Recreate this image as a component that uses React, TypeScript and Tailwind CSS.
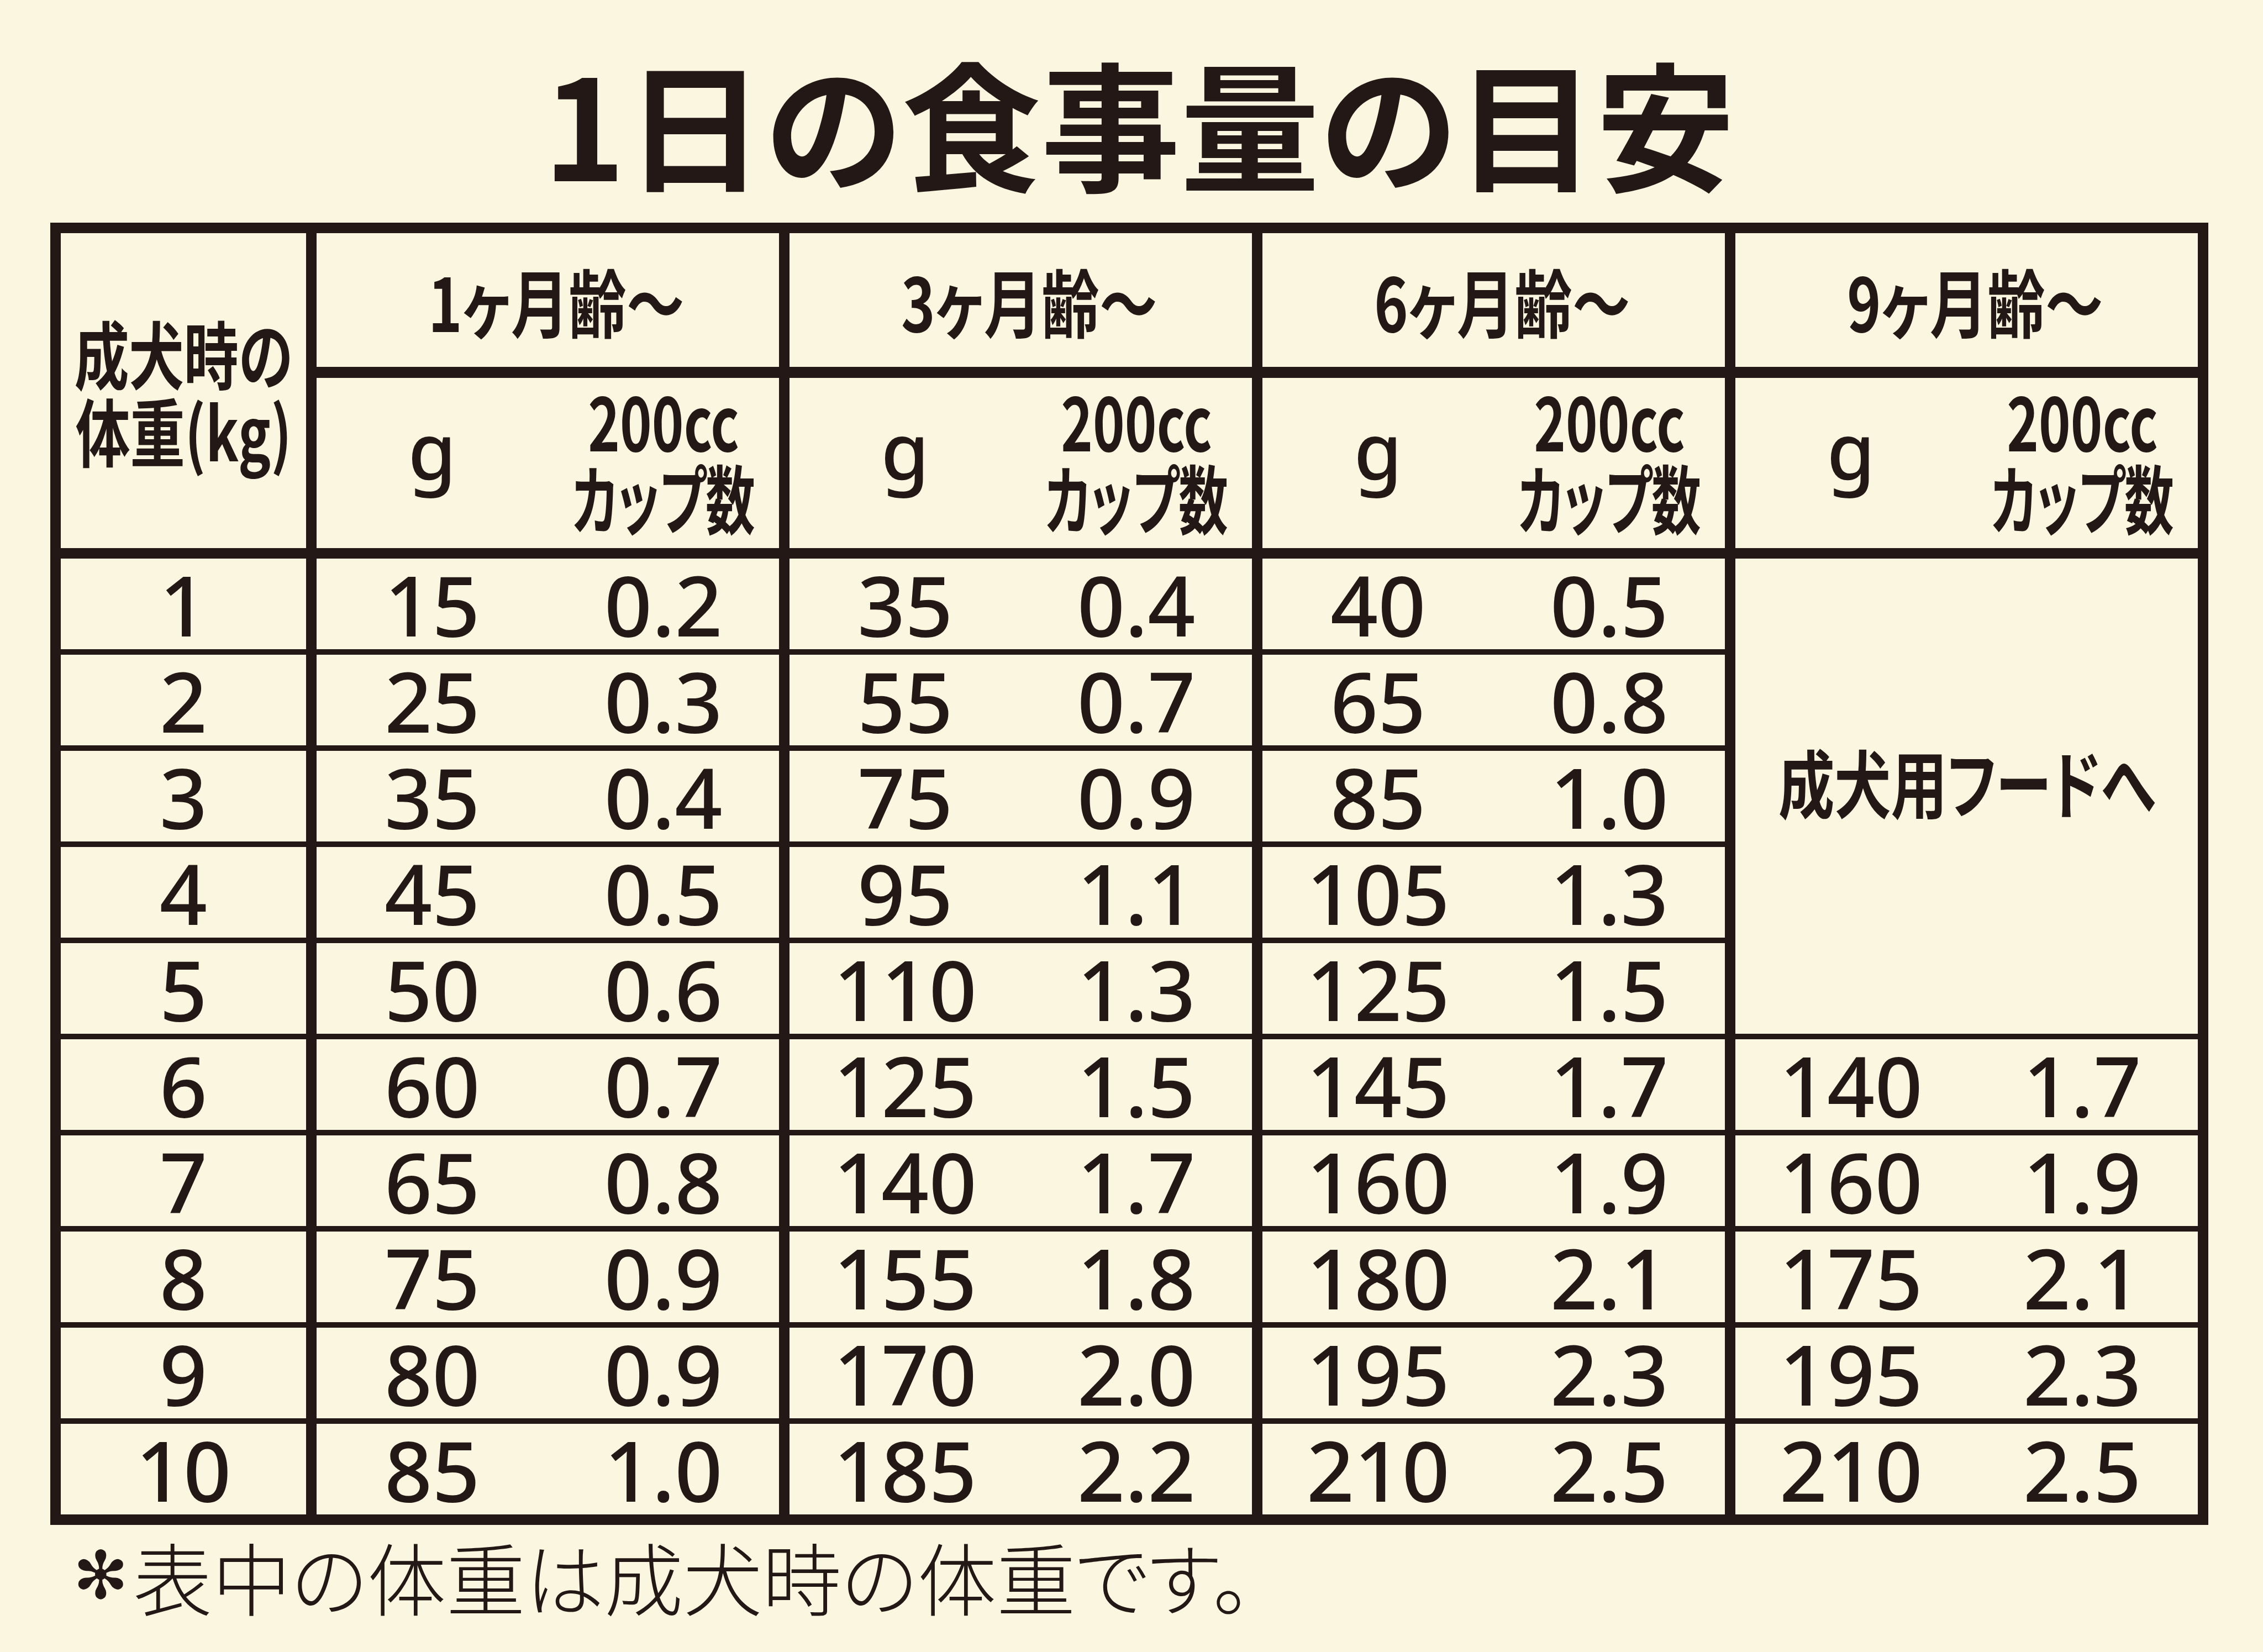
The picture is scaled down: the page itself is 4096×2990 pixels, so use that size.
import React from "react";

type Pair = [string, string];

type Row = {
  kg: string;
  groups: (Pair | null)[];
};

const AGES = ["1ヶ月齢〜", "3ヶ月齢〜", "6ヶ月齢〜", "9ヶ月齢〜"];

const ROWS: Row[] = [
  { kg: "1", groups: [["15", "0.2"], ["35", "0.4"], ["40", "0.5"], null] },
  { kg: "2", groups: [["25", "0.3"], ["55", "0.7"], ["65", "0.8"], null] },
  { kg: "3", groups: [["35", "0.4"], ["75", "0.9"], ["85", "1.0"], null] },
  { kg: "4", groups: [["45", "0.5"], ["95", "1.1"], ["105", "1.3"], null] },
  { kg: "5", groups: [["50", "0.6"], ["110", "1.3"], ["125", "1.5"], null] },
  { kg: "6", groups: [["60", "0.7"], ["125", "1.5"], ["145", "1.7"], ["140", "1.7"]] },
  { kg: "7", groups: [["65", "0.8"], ["140", "1.7"], ["160", "1.9"], ["160", "1.9"]] },
  { kg: "8", groups: [["75", "0.9"], ["155", "1.8"], ["180", "2.1"], ["175", "2.1"]] },
  { kg: "9", groups: [["80", "0.9"], ["170", "2.0"], ["195", "2.3"], ["195", "2.3"]] },
  { kg: "10", groups: [["85", "1.0"], ["185", "2.2"], ["210", "2.5"], ["210", "2.5"]] },
];

const cell = "bg-[#FBF6DF] flex items-center justify-center";
const half = "flex-1 basis-0 min-w-0 flex justify-center";
const num = "font-['Noto_Sans','Noto_Sans_CJK_JP',sans-serif] font-medium text-[151px] leading-none whitespace-nowrap";
const jp = "font-['Noto_Sans_CJK_JP',sans-serif] [font-feature-settings:'palt'] whitespace-nowrap";

function SubHeader() {
  return (
    <div className={`${cell} mb-[9px]`}>
      <div className={half}>
        <span className="font-['Noto_Sans',sans-serif] font-medium text-[141px] leading-none -mt-[50px]">g</span>
      </div>
      <div className={half}>
        <div className={`${jp} font-bold text-[136px] leading-[140px] text-center -translate-y-[10px]`}>
          <div className="scale-x-[0.72]">200cc</div>
          <div className="scale-x-[0.66]">カップ数</div>
        </div>
      </div>
    </div>
  );
}

function Values({ pair }: { pair: Pair }) {
  return (
    <div className={cell}>
      <div className={half}>
        <span className={num}>{pair[0]}</span>
      </div>
      <div className={half}>
        <span className={num}>{pair[1]}</span>
      </div>
    </div>
  );
}

export default function App() {
  return (
    <div className="w-[4096px] h-[2990px] bg-[#FBF6DF] text-[#231815] overflow-hidden">
      <div className="ml-[91px] w-[3906px]">
        <h1
          className={`${jp} h-[403px] pt-[93px] pl-[36px] text-center text-[252px] leading-none font-bold`}
        >
          1日の食事量の目安
        </h1>

        <div className="grid grid-cols-[444px_repeat(4,837px)] grid-rows-[252px_317px_repeat(10,164px)] gap-x-[19px] gap-y-[10px] p-[19px] bg-[#231815]">
          <div className={`${cell} row-span-2 mb-[9px]`}>
            <div className={`${jp} font-bold text-[134px] leading-[140px] text-center scale-x-[0.74]`}>
              <div>成犬時の</div>
              <div>体重(kg)</div>
            </div>
          </div>
          {AGES.map((age) => (
            <div key={age} className={`${cell} mb-[10px]`}>
              <span className={`${jp} font-bold text-[134px] leading-none pl-[40px] scale-x-[0.78]`}>
                {age}
              </span>
            </div>
          ))}
          <SubHeader />
          <SubHeader />
          <SubHeader />
          <SubHeader />

          {ROWS.map((row, i) => (
            <React.Fragment key={row.kg}>
              <div className={cell}>
                <span className={num}>{row.kg}</span>
              </div>
              {row.groups.map((pair, g) =>
                pair ? (
                  <Values key={g} pair={pair} />
                ) : i === 0 ? (
                  <div key={g} className={`${cell} row-span-5`}>
                    <span className={`${jp} font-bold text-[134px] leading-none -translate-y-[28px] scale-x-[0.76]`}>
                      成犬用フードへ
                    </span>
                  </div>
                ) : null
              )}
            </React.Fragment>
          ))}
        </div>

        <p className={`${jp} mt-[20px] pl-[41px] text-[143px] leading-none font-light flex items-center`}>
          <span className="font-['DejaVu_Sans',sans-serif] text-[120px] mr-[8px]">✻</span>
          表中の体重は成犬時の体重です。
        </p>
      </div>
    </div>
  );
}
